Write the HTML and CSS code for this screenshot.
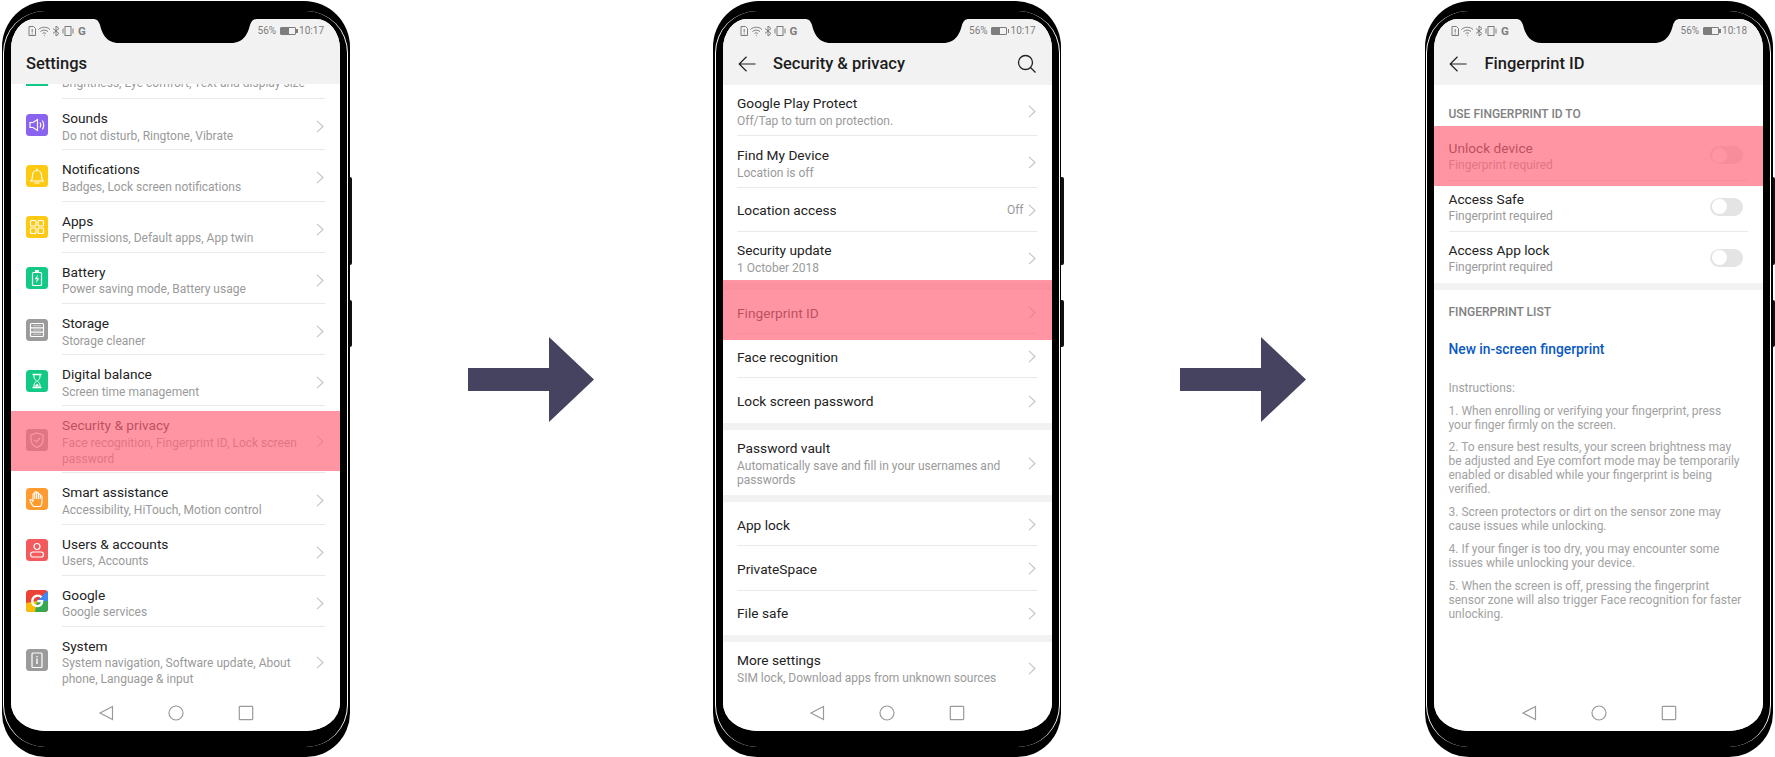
FILE: index.html
```html
<!DOCTYPE html>
<html lang="en">
<head>
  <meta charset="UTF-8" />
  <title>Fingerprint ID setup</title>
  <link rel="stylesheet" href="styles.css">
</head>
<body>

  <svg class="sprite" width="0" height="0">
    <symbol id="chev" viewBox="0 0 8 13"><path d="M1 .8 7 6.5 1 12.2" fill="none" stroke="currentColor" stroke-width="1.1"/></symbol>
    <symbol id="arrow" viewBox="0 0 126 85"><polygon points="0,31 81,31 81,0 126,42.5 81,85 81,54 0,54"/></symbol>
    <symbol id="notch" viewBox="0 0 164 24"><path d="M0 0C4 0 5.500 2 7 6C9 14 13 24 26 24H138C151 24 155 14 157 6C158.500 2 160 0 164 0Z"/></symbol>
    <symbol id="nav-back" viewBox="0 0 16 16"><path d="M14.500 1.500V14.500L2 8Z" fill="none" stroke="currentColor" stroke-width="1.200"/></symbol>
    <symbol id="nav-home" viewBox="0 0 16 16"><circle cx="8" cy="8" r="7" fill="none" stroke="currentColor" stroke-width="1.200"/></symbol>
    <symbol id="nav-recent" viewBox="0 0 16 16"><rect x="1.300" y="1.300" width="13.400" height="13.400" rx=".8" fill="none" stroke="currentColor" stroke-width="1.200"/></symbol>
    <symbol id="st-left" viewBox="0 0 48 12">
      <g fill="none" stroke="currentColor" stroke-width="1">
        <path d="M1 1.500H5.500L7.500 3.500V10.500H1Z"/>
        <path d="M4.200 4V7.500M4.200 8.500V9.500"/>
        <path d="M10.500 4.500C13.500 1.500 19 1.500 22 4.500M12.500 6.500C14.500 4.700 18 4.700 20 6.500M14.500 8.500C15.500 7.700 17 7.700 18 8.500"/>
        <path d="M16 10.500H16.600" stroke-width="1.400"/>
        <path d="M25 3.500 31 8.500 28 11V1L31 3.500 25 8.500"/>
        <rect x="37" y="1.500" width="6" height="9"/>
        <path d="M35 3.500V8.500M45 3.500V8.500"/>
      </g>
    </symbol>
    <symbol id="search" viewBox="0 0 20 20"><circle cx="8.500" cy="8.500" r="7" fill="none" stroke="currentColor" stroke-width="1.300"/><path d="M13.500 13.500 18.500 18.500" stroke="currentColor" stroke-width="1.300"/></symbol>
    <symbol id="back" viewBox="0 0 18 16"><path d="M17.500 8H1.200M8.500 .8 1.200 8 8.500 15.200" fill="none" stroke="currentColor" stroke-width="1.200"/></symbol>
  </svg>

  <div class="page">

    <!-- phone 1: settings -->
    <div class="phone">
      <span class="seam"></span>
      <span class="side side-vol"></span>
      <span class="side side-pow"></span>
      <div class="screen">
        <svg class="notch"><use href="#notch"/></svg>
        <div class="top top-short">
          <div class="status">
            <div class="st-left"><svg class="st-icons"><use href="#st-left"/></svg><b>G</b></div>
            <div class="st-right"><span>56%</span><span class="batt"></span><span>10:17</span></div>
          </div>
          <div class="bar"><span class="bar-title">Settings</span></div>
        </div>
        <div class="list">
          <div class="row cut">
            <span class="cut-icon"></span>
            <div class="row-body"><div class="row-text"><div class="sub">Brightness, Eye comfort, Text and display size</div></div></div>
          </div>
          <div class="row">
            <svg class="ico" viewBox="0 0 22 22"><rect width="22" height="22" rx="3.500" fill="#8a63ee"/><g fill="none" stroke="#fff" stroke-width="1.200"><path d="M4 8.500H7L11.500 5.500V16.500L7 13.500H4Z"/><path d="M14 8.500C15 10 15 12 14 13.500M16.300 6.500C18.200 9 18.200 13 16.300 15.500"/></g></svg>
            <div class="row-body"><div class="row-text"><div class="title">Sounds</div><div class="sub">Do not disturb, Ringtone, Vibrate</div></div><svg class="chev"><use href="#chev"/></svg></div>
          </div>
          <div class="row">
            <svg class="ico" viewBox="0 0 22 22"><rect width="22" height="22" rx="3.500" fill="#fdc911"/><g fill="none" stroke="#fff" stroke-width="1.200"><path d="M5 16H17C15.500 14.500 15.500 13 15.500 10.500C15.500 7.500 13.500 5.500 11 5.500C8.500 5.500 6.500 7.500 6.500 10.500C6.500 13 6.500 14.500 5 16Z"/><path d="M11 3.500V5.500M8.500 18H13.500"/></g></svg>
            <div class="row-body"><div class="row-text"><div class="title">Notifications</div><div class="sub">Badges, Lock screen notifications</div></div><svg class="chev"><use href="#chev"/></svg></div>
          </div>
          <div class="row">
            <svg class="ico" viewBox="0 0 22 22"><rect width="22" height="22" rx="3.500" fill="#fdc911"/><g fill="none" stroke="#fff" stroke-width="1.200"><rect x="4.500" y="4.500" width="5.500" height="5.500" rx="1"/><rect x="12" y="4.500" width="5.500" height="5.500" rx="1"/><rect x="4.500" y="12" width="5.500" height="5.500" rx="1"/><rect x="12" y="12" width="5.500" height="5.500" rx="1"/></g></svg>
            <div class="row-body"><div class="row-text"><div class="title">Apps</div><div class="sub">Permissions, Default apps, App twin</div></div><svg class="chev"><use href="#chev"/></svg></div>
          </div>
          <div class="row">
            <svg class="ico" viewBox="0 0 22 22"><rect width="22" height="22" rx="3.500" fill="#12c985"/><rect x="6.500" y="5.500" width="9" height="13" rx="1" fill="none" stroke="#fff" stroke-width="1.200"/><rect x="9" y="3" width="4" height="2" fill="#fff"/><path d="M11.800 7.500 8.800 12.300H10.800L10.200 16 13.200 11.200H11.200Z" fill="#fff"/></svg>
            <div class="row-body"><div class="row-text"><div class="title">Battery</div><div class="sub">Power saving mode, Battery usage</div></div><svg class="chev"><use href="#chev"/></svg></div>
          </div>
          <div class="row">
            <svg class="ico" viewBox="0 0 22 22"><rect width="22" height="22" rx="3.500" fill="#9b9b9b"/><rect x="4.500" y="4.500" width="13" height="13" rx="1" fill="none" stroke="#fff" stroke-width="1.200"/><path d="M5 8.800H17M5 13.200H17" stroke="#fff" stroke-width="1.200"/><path d="M7 6.700H15M7 11H15M7 15.300H15" stroke="#fff" stroke-width=".7" opacity=".7"/></svg>
            <div class="row-body"><div class="row-text"><div class="title">Storage</div><div class="sub">Storage cleaner</div></div><svg class="chev"><use href="#chev"/></svg></div>
          </div>
          <div class="row">
            <svg class="ico" viewBox="0 0 22 22"><rect width="22" height="22" rx="3.500" fill="#12c985"/><path d="M6.500 4.500H15.500M6.500 17.500H15.500" stroke="#fff" stroke-width="1.300"/><path d="M8 5V7C8 9 10 10 10.500 11C10 12 8 13 8 15V17M14 5V7C14 9 12 10 11.500 11C12 12 14 13 14 15V17" fill="none" stroke="#fff" stroke-width="1"/><path d="M8.500 16.500 11 13.500 13.500 16.500Z" fill="#fff"/></svg>
            <div class="row-body"><div class="row-text"><div class="title">Digital balance</div><div class="sub">Screen time management</div></div><svg class="chev"><use href="#chev"/></svg></div>
          </div>
          <div class="row">
            <svg class="ico" viewBox="0 0 22 22"><rect width="22" height="22" rx="3.500" fill="#9b9b9b"/><path d="M11 4 17 6V11C17 14.500 14.500 17 11 18.500C7.500 17 5 14.500 5 11V6Z" fill="none" stroke="#fff" stroke-width="1.200"/><path d="M8 10.800 10.300 13 14.200 9" fill="none" stroke="#fff" stroke-width="1.200"/></svg>
            <div class="row-body"><div class="row-text"><div class="title">Security &amp; privacy</div><div class="sub">Face recognition, Fingerprint ID, Lock screen password</div></div><svg class="chev"><use href="#chev"/></svg></div>
          </div>
          <div class="row">
            <svg class="ico" viewBox="0 0 22 22"><rect width="22" height="22" rx="3.500" fill="#ff9b2f"/><path d="M7.500 18.500C6 16.500 4.500 14 4 12.500C3.700 11.500 5 11 5.800 12L7 13.500V6.500C7 5.300 8.700 5.300 8.700 6.500V10.500V4.800C8.700 3.600 10.500 3.600 10.500 4.800V10.500V5.300C10.500 4.100 12.300 4.100 12.300 5.300V10.800V7C12.300 5.800 14.200 5.800 14.200 7V10.500V8.500C14.200 7.400 16 7.400 16 8.500V14C16 16 15.200 17.500 14.500 18.500Z" fill="none" stroke="#fff" stroke-width="1.100" stroke-linejoin="round"/></svg>
            <div class="row-body"><div class="row-text"><div class="title">Smart assistance</div><div class="sub">Accessibility, HiTouch, Motion control</div></div><svg class="chev"><use href="#chev"/></svg></div>
          </div>
          <div class="row">
            <svg class="ico" viewBox="0 0 22 22"><rect width="22" height="22" rx="3.500" fill="#f35a5e"/><circle cx="11" cy="7.500" r="3" fill="none" stroke="#fff" stroke-width="1.200"/><rect x="4.500" y="13" width="13" height="5" rx="2.500" fill="none" stroke="#fff" stroke-width="1.200"/></svg>
            <div class="row-body"><div class="row-text"><div class="title">Users &amp; accounts</div><div class="sub">Users, Accounts</div></div><svg class="chev"><use href="#chev"/></svg></div>
          </div>
          <div class="row">
            <svg class="ico" viewBox="0 0 22 22"><defs><clipPath id="g-clip"><rect width="22" height="22" rx="3.500"/></clipPath></defs><g clip-path="url(#g-clip)"><rect width="22" height="22" fill="#ea4335"/><path d="M11 11 22 0V14H11Z" fill="#4285f4"/><path d="M0 13 11 11 13 22H0Z" fill="#fbbc05"/><path d="M11 11H22V22H9Z" fill="#34a853"/><path d="M15.500 7.300C13 4.500 7 5.300 6.300 10.500C5.800 15.500 11 17.500 14.500 15C15.800 14 16.200 12.700 16.200 11.200H11.300" fill="none" stroke="#fff" stroke-width="2.300"/></g></svg>
            <div class="row-body"><div class="row-text"><div class="title">Google</div><div class="sub">Google services</div></div><svg class="chev"><use href="#chev"/></svg></div>
          </div>
          <div class="row">
            <svg class="ico" viewBox="0 0 22 22"><rect width="22" height="22" rx="3.500" fill="#9b9b9b"/><rect x="6" y="4" width="10" height="14.500" rx="1" fill="none" stroke="#fff" stroke-width="1.200"/><path d="M11 7V8.200M11 9.500V15" stroke="#fff" stroke-width="1.400"/></svg>
            <div class="row-body"><div class="row-text"><div class="title">System</div><div class="sub">System navigation, Software update, About phone, Language &amp; input</div></div><svg class="chev"><use href="#chev"/></svg></div>
          </div>
        </div>
        <div class="nav">
          <svg class="nav-key"><use href="#nav-back"/></svg>
          <svg class="nav-key"><use href="#nav-home"/></svg>
          <svg class="nav-key"><use href="#nav-recent"/></svg>
        </div>
        <div class="mark mark-security"></div>
      </div>
    </div>

    <svg class="step"><use href="#arrow"/></svg>

    <!-- phone 2: security & privacy -->
    <div class="phone">
      <span class="seam"></span>
      <span class="side side-vol"></span>
      <span class="side side-pow"></span>
      <div class="screen tight">
        <svg class="notch"><use href="#notch"/></svg>
        <div class="top">
          <div class="status">
            <div class="st-left"><svg class="st-icons"><use href="#st-left"/></svg><b>G</b></div>
            <div class="st-right"><span>56%</span><span class="batt"></span><span>10:17</span></div>
          </div>
          <div class="bar">
            <svg class="back"><use href="#back"/></svg>
            <span class="bar-title">Security &amp; privacy</span>
            <svg class="search"><use href="#search"/></svg>
          </div>
        </div>
        <div class="list">
          <div class="group">
            <div class="row"><div class="row-body"><div class="row-text"><div class="title">Google Play Protect</div><div class="sub">Off/Tap to turn on protection.</div></div><svg class="chev"><use href="#chev"/></svg></div></div>
            <div class="row"><div class="row-body"><div class="row-text"><div class="title">Find My Device</div><div class="sub">Location is off</div></div><svg class="chev"><use href="#chev"/></svg></div></div>
            <div class="row one"><div class="row-body"><div class="row-text"><div class="title">Location access</div></div><span class="value">Off</span><svg class="chev"><use href="#chev"/></svg></div></div>
            <div class="row"><div class="row-body"><div class="row-text"><div class="title">Security update</div><div class="sub">1 October 2018</div></div><svg class="chev"><use href="#chev"/></svg></div></div>
          </div>
          <div class="group">
            <div class="row one"><div class="row-body"><div class="row-text"><div class="title">Fingerprint ID</div></div><svg class="chev"><use href="#chev"/></svg></div></div>
            <div class="row one"><div class="row-body"><div class="row-text"><div class="title">Face recognition</div></div><svg class="chev"><use href="#chev"/></svg></div></div>
            <div class="row one"><div class="row-body"><div class="row-text"><div class="title">Lock screen password</div></div><svg class="chev"><use href="#chev"/></svg></div></div>
          </div>
          <div class="group">
            <div class="row"><div class="row-body"><div class="row-text"><div class="title">Password vault</div><div class="sub">Automatically save and fill in your usernames and passwords</div></div><svg class="chev"><use href="#chev"/></svg></div></div>
          </div>
          <div class="group">
            <div class="row one"><div class="row-body"><div class="row-text"><div class="title">App lock</div></div><svg class="chev"><use href="#chev"/></svg></div></div>
            <div class="row one"><div class="row-body"><div class="row-text"><div class="title">PrivateSpace</div></div><svg class="chev"><use href="#chev"/></svg></div></div>
            <div class="row one"><div class="row-body"><div class="row-text"><div class="title">File safe</div></div><svg class="chev"><use href="#chev"/></svg></div></div>
          </div>
          <div class="group">
            <div class="row"><div class="row-body"><div class="row-text"><div class="title">More settings</div><div class="sub">SIM lock, Download apps from unknown sources</div></div><svg class="chev"><use href="#chev"/></svg></div></div>
          </div>
        </div>
        <div class="nav">
          <svg class="nav-key"><use href="#nav-back"/></svg>
          <svg class="nav-key"><use href="#nav-home"/></svg>
          <svg class="nav-key"><use href="#nav-recent"/></svg>
        </div>
        <div class="mark mark-fingerprint"></div>
      </div>
    </div>

    <svg class="step"><use href="#arrow"/></svg>

    <!-- phone 3: fingerprint id -->
    <div class="phone">
      <span class="seam"></span>
      <span class="side side-vol"></span>
      <span class="side side-pow"></span>
      <div class="screen tight">
        <svg class="notch"><use href="#notch"/></svg>
        <div class="top">
          <div class="status">
            <div class="st-left"><svg class="st-icons"><use href="#st-left"/></svg><b>G</b></div>
            <div class="st-right"><span>56%</span><span class="batt"></span><span>10:18</span></div>
          </div>
          <div class="bar">
            <svg class="back"><use href="#back"/></svg>
            <span class="bar-title">Fingerprint ID</span>
          </div>
        </div>
        <div class="list">
          <div class="group">
            <div class="label label-first">USE FINGERPRINT ID TO</div>
            <div class="row wide"><div class="row-body"><div class="row-text"><div class="title">Unlock device</div><div class="sub">Fingerprint required</div></div><span class="toggle"></span></div></div>
            <div class="row wide"><div class="row-body"><div class="row-text"><div class="title">Access Safe</div><div class="sub">Fingerprint required</div></div><span class="toggle"></span></div></div>
            <div class="row wide"><div class="row-body"><div class="row-text"><div class="title">Access App lock</div><div class="sub">Fingerprint required</div></div><span class="toggle"></span></div></div>
          </div>
          <div class="group">
            <div class="label">FINGERPRINT LIST</div>
            <div class="link">New in-screen fingerprint</div>
            <div class="notes">
              <p>Instructions:</p>
              <p>1. When enrolling or verifying your fingerprint, press your finger firmly on the screen.</p>
              <p>2. To ensure best results, your screen brightness may be adjusted and Eye comfort mode may be temporarily enabled or disabled while your fingerprint is being verified.</p>
              <p>3. Screen protectors or dirt on the sensor zone may cause issues while unlocking.</p>
              <p>4. If your finger is too dry, you may encounter some issues while unlocking your device.</p>
              <p>5. When the screen is off, pressing the fingerprint sensor zone will also trigger Face recognition for faster unlocking.</p>
            </div>
          </div>
        </div>
        <div class="nav">
          <svg class="nav-key"><use href="#nav-back"/></svg>
          <svg class="nav-key"><use href="#nav-home"/></svg>
          <svg class="nav-key"><use href="#nav-recent"/></svg>
        </div>
        <div class="mark mark-unlock"></div>
      </div>
    </div>

  </div>
</body>
</html>
```

FILE: styles.css
```css
* { margin: 0; padding: 0; box-sizing: border-box; }
html, body {
  width: 100%;
  height: 100%;
  overflow: hidden;
  background: white;
  font-family: "Roboto", "Liberation Sans", sans-serif;
}

.sprite { position: absolute; }

.page {
  display: grid;
  grid-template-columns: 348px 126px 348px 126px 348px;
  column-gap: 118.75px;
  align-items: center;
  padding: 1px 0 0 1.5px;
}

.step {
  width: 126px;
  height: 85px;
  fill: #454360;
}

/* phone body */
.phone {
  position: relative;
  width: 348px;
  height: 756px;
  padding: 18px 9.5px 26px;
  background: black;
  border-radius: 46px 46px 44px 44px;
}

.seam {
  position: absolute;
  top: 10px;
  bottom: 10px;
  left: 1.5px;
  right: 1.5px;
  border-left: 1.5px solid white;
  border-right: 1.5px solid white;
  border-radius: 42px;
}

.side {
  position: absolute;
  right: -2.5px;
  width: 2.5px;
  background: #111;
  border-radius: 0 2px 2px 0;
}
.side-vol { top: 176px; height: 88px; }
.side-pow { top: 299px; height: 47px; }

.screen {
  position: relative;
  display: flex;
  flex-direction: column;
  height: 712px;
  overflow: hidden;
  background: white;
  border-radius: 24px 24px 34px 34px / 30px 30px 28px 28px;
}

.notch {
  position: absolute;
  top: 0;
  left: 82px;
  width: 164px;
  height: 24px;
  fill: black;
}

/* status bar + title */
.top {
  flex: none;
  height: 66px;
  background: #f2f2f2;
}
.top-short { height: 65px; }

.status {
  display: flex;
  justify-content: space-between;
  align-items: center;
  height: 20px;
  padding: 3px 16px 0 17px;
  color: #7d7d7d;
  font-size: 10px;
}
.st-left { display: flex; align-items: center; gap: 2px; }
.st-left b { font-size: 11.5px; }
.st-icons { width: 48px; height: 12px; }
.st-right { display: flex; align-items: center; gap: 3.500px; }
.batt {
  position: relative;
  width: 16px;
  height: 8px;
  border: 1px solid #7d7d7d;
  border-radius: 1px;
  background: linear-gradient(to right, #7d7d7d 60%, transparent 60%);
}
.batt::after {
  content: "";
  position: absolute;
  top: 1px;
  right: -3px;
  width: 1.500px;
  height: 4px;
  background: #7d7d7d;
}

.bar {
  display: flex;
  align-items: center;
  height: 46px;
  padding: 3px 15px 0 15px;
  color: #1c1c1c;
}
.bar-title { font-size: 16.5px; font-weight: 500; }
.back {
  width: 18px;
  height: 16px;
  margin-right: 17.500px;
  color: #222;
}
.search {
  width: 20px;
  height: 20px;
  margin-left: auto;
  color: #222;
}

/* list rows */
.list {
  flex: 1;
  min-height: 0;
  overflow: hidden;
}

.group { background: white; }
.group + .group { border-top: 7px solid #f2f2f2; }
.group > .row:last-child .row-body { border-bottom-color: transparent; }

.row {
  display: flex;
  align-items: center;
  padding: 0 15px;
}

.ico {
  flex: none;
  width: 22px;
  height: 22px;
  margin-right: 14px;
}

.row-body {
  flex: 1;
  min-width: 0;
  display: flex;
  align-items: center;
  padding: 10px 0 5px;
  border-bottom: 1px solid #e9e9e9;
}
.row:last-child .row-body { border-bottom-color: transparent; }
.row-text { flex: 1; min-width: 0; }

.title {
  color: #222;
  font-size: 13.700px;
  line-height: 18px;
}
.sub {
  margin-top: 1.500px;
  color: #9a9a9a;
  font-size: 12px;
  line-height: 15.700px;
}

.chev {
  flex: none;
  width: 8px;
  height: 13px;
  margin: 0 1px 0 14px;
  color: #c4c4c4;
}

.value {
  color: #9a9a9a;
  font-size: 12px;
  margin-right: -10px;
}

/* top row of phone 1 is scrolled under the title bar */
.cut {
  align-items: flex-end;
  height: 15.200px;
  overflow: hidden;
}
.cut .row-body { padding: 0 0 6px; }
.cut .sub { margin-top: 0; }
.cut-icon {
  flex: none;
  align-self: flex-start;
  width: 22px;
  height: 1.500px;
  margin-right: 14px;
  background: #12c985;
}

/* phones 2 and 3 have tighter sub text */
.tight .row { padding: 0 15px 0 14.500px; }
.tight .row-body { padding: 9.300px 0 6.700px; }
.tight .sub {
  margin-top: 2px;
  line-height: 14.300px;
}
.tight .one .row-body {
  height: 44.200px;
  padding: 2px 0 0;
}

.tight .wide .row-body { padding: 9px 0 7.400px; }
.tight .wide .sub { margin-top: 1.500px; }

.toggle {
  position: relative;
  flex: none;
  width: 33px;
  height: 18px;
  margin: 0 5px 0 0;
  border-radius: 9px;
  background: #e4e4e4;
}
.toggle::after {
  content: "";
  position: absolute;
  top: 1.500px;
  left: 1.500px;
  width: 15px;
  height: 15px;
  border-radius: 50%;
  background: white;
}

.label {
  padding: 15px 14.500px 0;
  height: 36px;
  color: #808080;
  font-size: 12px;
  font-weight: 500;
  line-height: 14px;
}
.label-first { height: 44.500px; padding-top: 22px; }

.link {
  padding: 15px 14.500px 0;
  color: #0a59c2;
  font-size: 13.800px;
  font-weight: 500;
  line-height: 16px;
}

.notes {
  padding: 24px 20.500px 0 14.500px;
  color: #a2a2a2;
  font-size: 12px;
  line-height: 14px;
}
.notes p { margin-bottom: 8.700px; }

/* navigation keys */
.nav {
  flex: none;
  display: flex;
  justify-content: center;
  align-items: center;
  gap: 54px;
  height: 36px;
  color: #9a9a9a;
  background: white;
}
.nav-key { width: 16px; height: 16px; }

/* pink highlight over the step's row */
.mark {
  position: absolute;
  left: 0;
  right: 0;
  height: 60px;
  background: rgba(255, 101, 122, 0.69);
}
.mark-security { top: 391.700px; }
.mark-fingerprint { top: 261px; }
.mark-unlock { top: 106.700px; }
```
